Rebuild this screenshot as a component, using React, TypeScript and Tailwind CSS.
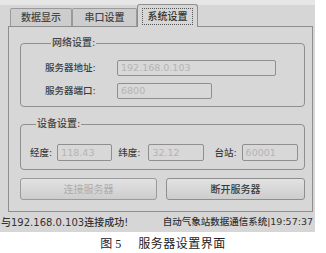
const ui = "font-['DejaVu_Sans','Noto_Sans_CJK_SC',sans-serif]";

function Tab({ label, selected, width }: { label: string; selected?: boolean; width: string }) {
  if (selected) {
    return (
      <div
        className={`${width} h-[23px] -mb-px z-10 bg-[#d7d7d7] border border-b-0 border-[#8e8e8e] rounded-t-[3px] px-[4px] pt-[3px] pb-[2px]`}
      >
        <div className="h-full border border-dotted border-[#555] flex items-center justify-center text-[10px] font-medium text-[#333] whitespace-nowrap">
          {label}
        </div>
      </div>
    );
  }
  return (
    <div
      className={`${width} h-[18px] bg-[#cdcdcd] border border-b-0 border-[#9a9a9a] rounded-t-[2px] flex items-center justify-center text-[10px] font-medium text-[#444] whitespace-nowrap`}
    >
      {label}
    </div>
  );
}

function Field({ value, width, height = "h-[16px]" }: { value: string; width: string; height?: string }) {
  return (
    <div
      className={`${width} ${height} shrink-0 border border-[#8f8f8f] rounded-[2px] bg-[#d8d8d8] flex items-center px-[3px] text-[9.5px] text-[#b4b4b4] whitespace-nowrap`}
    >
      {value}
    </div>
  );
}

function Group({ title, children, className }: { title: string; children: React.ReactNode; className?: string }) {
  return (
    <fieldset className={`border border-[#8f8f8f] rounded-[4px] ${className ?? ""}`}>
      <legend className="ml-[6px] px-[1px] text-[10px] leading-[12px] font-medium text-[#444] whitespace-nowrap">
        {title}
      </legend>
      {children}
    </fieldset>
  );
}

export default function App() {
  return (
    <div className={`w-[326px] h-[253px] bg-white ${ui}`}>
      <div className="w-[315px] h-[232px] bg-[#d6d6d6] flex flex-col">
        <div className="h-[5px] bg-[#e6e6e6]" />

        {/* tabs */}
        <div className="h-[21px] pl-[10px] flex items-end">
          <Tab label="数据显示" width="w-[62px]" />
          <Tab label="串口设置" width="w-[65px]" />
          <Tab label="系统设置" width="w-[61px]" selected />
        </div>

        {/* panel */}
        <div className="ml-[8px] w-[305px] h-[186px] border border-[#8e8e8e] bg-[#d7d7d7] pt-[10px] pl-[11px] pr-[7px] flex flex-col">
          <Group title="网络设置:" className="pt-[11px] pb-[7px] pl-[24px]">
            <div className="grid grid-cols-[52px_auto] gap-x-[20px] gap-y-[7px] items-center">
              <span className="text-[9.5px] leading-[12px] font-medium text-[#3c3c3c] whitespace-nowrap">服务器地址:</span>
              <Field value="192.168.0.103" width="w-[159px]" />
              <span className="text-[9.5px] leading-[12px] font-medium text-[#3c3c3c] whitespace-nowrap">服务器端口:</span>
              <Field value="6800" width="w-[95px]" />
            </div>
          </Group>

          <Group title="设备设置:" className="mt-[11px] pt-[14px] pb-[8px] pl-[9px]">
            <div className="flex items-center text-[9.5px] leading-[12px] font-medium text-[#3c3c3c] whitespace-nowrap">
              <span>经度:</span>
              <div className="ml-[5px]">
                <Field value="118.43" width="w-[55px]" height="h-[17px]" />
              </div>
              <span className="ml-[6px]">纬度:</span>
              <div className="ml-[8px]">
                <Field value="32.12" width="w-[56px]" height="h-[17px]" />
              </div>
              <span className="ml-[10px]">台站:</span>
              <div className="ml-[5px]">
                <Field value="60001" width="w-[56px]" height="h-[17px]" />
              </div>
            </div>
          </Group>

          <div className="mt-[8px] flex gap-[9px]">
            <button className="w-[137px] h-[22px] border border-[#9a9a9a] rounded-[3px] bg-gradient-to-b from-[#e2e2e2] to-[#cdcdcd] text-[10px] text-[#adadad]">
              连接服务器
            </button>
            <button className="w-[139px] h-[22px] border border-[#8e8e8e] rounded-[3px] bg-gradient-to-b from-[#e2e2e2] to-[#cdcdcd] text-[10px] font-medium text-[#3a3a3a]">
              断开服务器
            </button>
          </div>
        </div>

        {/* status bar */}
        <div className="flex-1 flex items-center justify-between pl-[1px] pr-[2px] text-[#333] font-medium whitespace-nowrap">
          <span className="text-[10px]">与192.168.0.103连接成功!</span>
          <span className="text-[9.5px]">自动气象站数据通信系统|19:57:37</span>
        </div>
      </div>

      <div className="mt-[6px] flex justify-center text-[12px] leading-[12px] text-[#222] font-['Liberation_Serif','Noto_Sans_CJK_SC',serif]">
        <span>图 5</span>
        <span className="ml-[17px] tracking-[0.5px]">服务器设置界面</span>
      </div>
    </div>
  );
}
